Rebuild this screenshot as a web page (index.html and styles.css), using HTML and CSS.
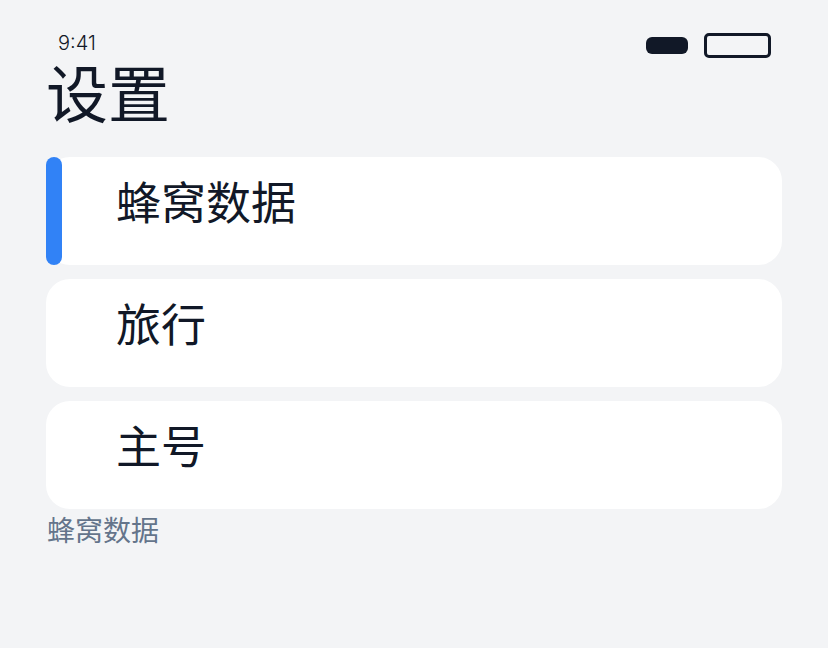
FILE: index.html
```html
<!DOCTYPE html>
<html>
   <head>
      <meta name="viewport" content="width=device-width, initial-scale=1.0"/>
      <link rel="stylesheet" href="styles.css">
   </head>
   <body>
      <div class="screen">
         <!--status bar-->
         <div class="status">
            <span class="time">9:41</span>
            <div class="icons">
               <span class="signal"></span>
               <span class="battery"></span>
            </div>
         </div>
         <h1 class="title">设置</h1>
         <!--settings list-->
         <div class="list">
            <div class="item active">
               <span class="marker"></span>
               <span class="label">蜂窝数据</span>
            </div>
            <div class="item">
               <span class="label">旅行</span>
            </div>
            <div class="item">
               <span class="label">主号</span>
            </div>
         </div>
         <p class="caption">蜂窝数据</p>
      </div>
   </body>
</html>
```

FILE: styles.css
```css
body {
margin: 0;
background: #f3f4f6;
font-family: Inter, "Noto Sans CJK SC", sans-serif;
color: #111827;
}
.screen {
padding: 0 46px;
}
.status {
display: flex;
justify-content: space-between;
align-items: center;
height: 24px;
padding: 31px 11px 0 12px;
}
.time {
font-size: 20px;
line-height: 20px;
font-weight: 300;
}
.icons {
display: flex;
align-items: center;
gap: 16px;
padding-top: 4px;
}
.signal {
width: 42px;
height: 17px;
border-radius: 6px;
background: #111827;
}
.battery {
width: 61px;
height: 19px;
border: 3px solid #111827;
border-radius: 5px;
}
.title {
margin: 6px 0 0 0;
font-family: "Noto Sans CJK SC", sans-serif;
font-weight: 400;
font-size: 62px;
line-height: 60px;
}
.list {
display: flex;
flex-direction: column;
gap: 14px;
margin-top: 36px;
}
.item {
position: relative;
display: flex;
align-items: flex-start;
height: 108px;
box-sizing: border-box;
background: #ffffff;
border-radius: 24px;
padding: 16px 0 0 70px;
}
.marker {
position: absolute;
left: 0;
top: 0;
bottom: 0;
width: 16px;
border-radius: 8px;
background: #3182f6;
}
.label {
font-family: "Noto Sans CJK SC", sans-serif;
font-size: 45px;
line-height: 56px;
}
.caption {
margin: 2px 0 0 1px;
font-family: "Noto Sans CJK SC", sans-serif;
font-size: 28px;
line-height: 36px;
color: #64748b;
}
```
